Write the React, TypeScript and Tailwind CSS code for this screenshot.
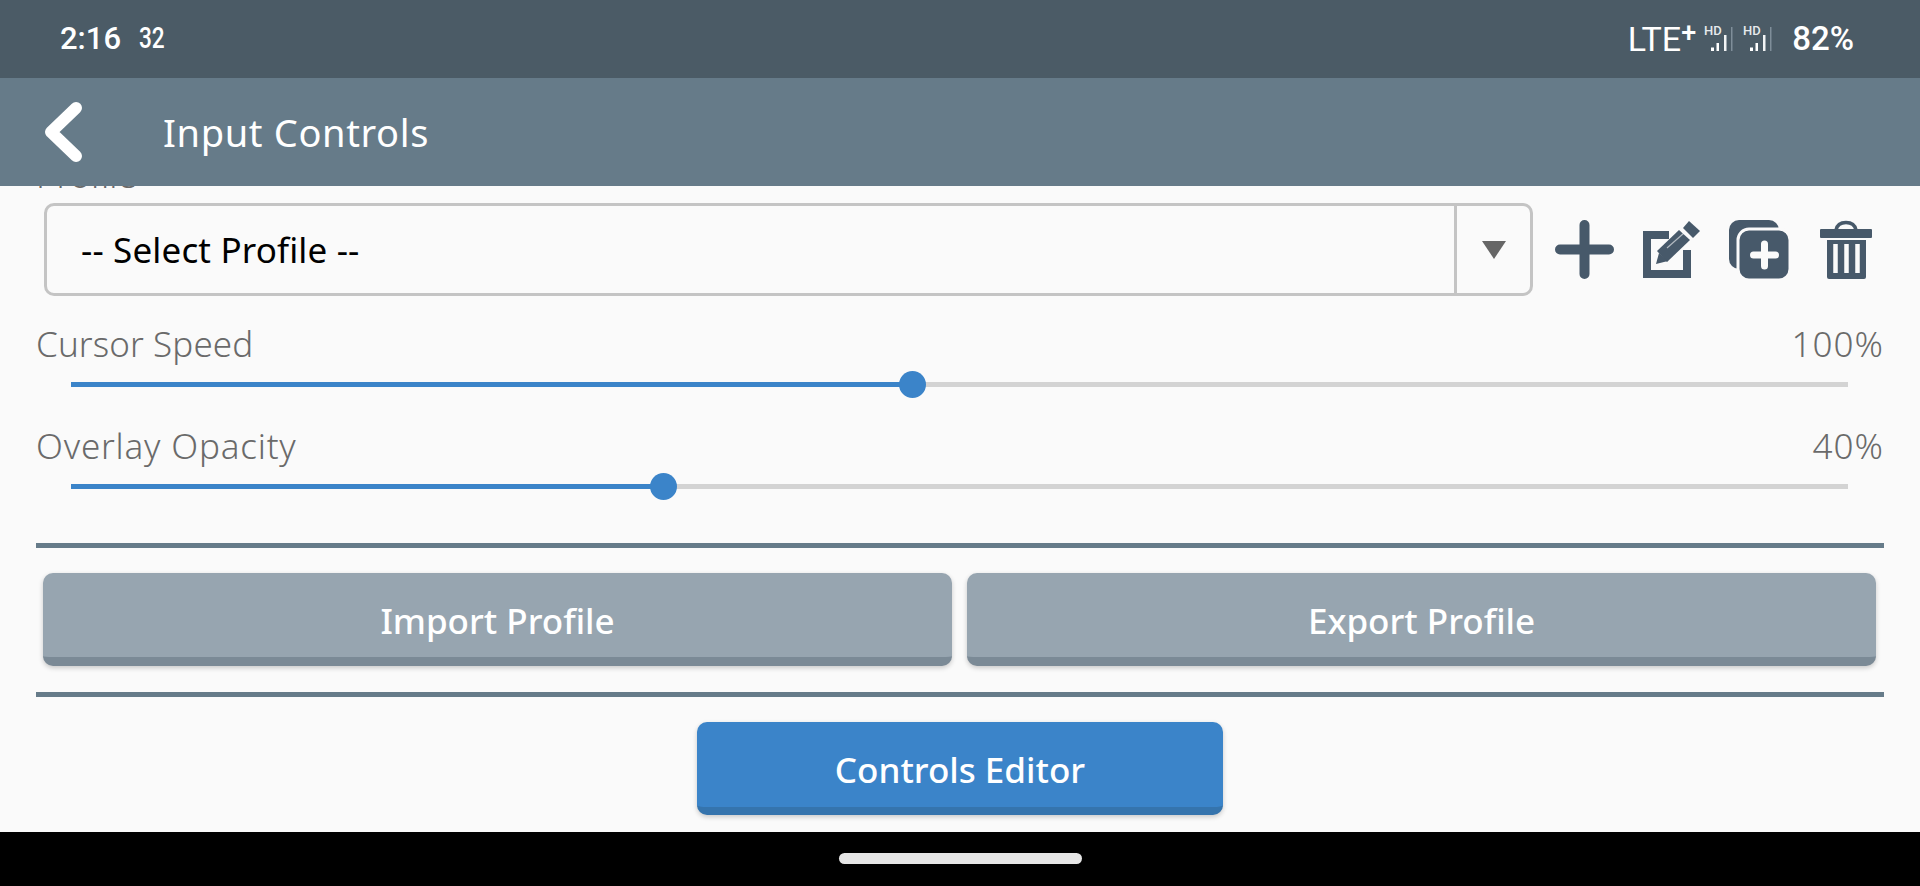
import { useState } from "react";

const FONT = "font-['Noto_Sans',sans-serif]";

function SignalIcon() {
  return (
    <svg width="32" height="30" viewBox="0 0 32 30" className="block">
      <text x="1" y="11" fontSize="13" fill="#e6eaec" fontFamily="Roboto, sans-serif">HD</text>
      <rect x="8" y="23.5" width="3" height="3.5" fill="#fff" />
      <rect x="13.5" y="19" width="2.5" height="8" fill="#fff" />
      <rect x="21" y="11" width="2.5" height="16" fill="#f2f4f5" />
      <rect x="28" y="3" width="1.5" height="24" fill="#7f8e99" />
    </svg>
  );
}

function PlusIcon() {
  return (
    <svg width="59" height="59" viewBox="0 0 59 59">
      <path d="M29.5 5v49M5 29.5h49" stroke="#47596a" strokeWidth="10" strokeLinecap="round" fill="none" />
    </svg>
  );
}

function EditIcon() {
  return (
    <svg width="58" height="58" viewBox="0 0 58 58">
      <path d="M26 14H4v39h40V29" stroke="#47596a" strokeWidth="8" fill="none" />
      <path d="M46 0 L57 10 L50 17 L40 7 Z" fill="#47596a" />
      <path d="M36 9 L47 19 L24 41 L14 30 Z" fill="#47596a" />
      <path d="M13 43 L16 32 L25 40 Z" fill="#47596a" />
      <path d="M24 27 L41 12" stroke="#fafafa" strokeWidth="1.2" opacity="0.6" fill="none" />
    </svg>
  );
}

function CopyPlusIcon() {
  return (
    <svg width="60" height="59" viewBox="0 0 60 59">
      <rect x="0" y="0" width="50" height="49" rx="10" fill="#47596a" />
      <rect x="9" y="9" width="52" height="51" rx="11" fill="#47596a" stroke="#fafafa" strokeWidth="3" />
      <path d="M35.5 24v22M24.5 35h22" stroke="#fafafa" strokeWidth="7" strokeLinecap="round" fill="none" />
    </svg>
  );
}

function TrashIcon() {
  return (
    <svg width="52" height="59" viewBox="0 0 52 59">
      <path d="M16 10C17 5 21 2.5 26 2.5s9 2.5 10 7.5" stroke="#47596a" strokeWidth="3.5" fill="none" />
      <rect x="0" y="9" width="52" height="9" rx="1" fill="#47596a" />
      <path d="M7 20h39v37a2 2 0 0 1-2 2H9a2 2 0 0 1-2-2Z" fill="#47596a" />
      <path d="M15.5 24v29M26.5 24v29M37.5 24v29" stroke="#fafafa" strokeWidth="4.5" fill="none" />
    </svg>
  );
}

function Slider({
  label,
  value,
  percent,
  labelClass,
}: {
  label: string;
  value: string;
  percent: number;
  labelClass: string;
}) {
  return (
    <div className="flex flex-col">
      <div className="flex justify-between h-[38px] pb-[2px] items-center text-[35px] leading-none text-[#6a6a6a] font-light">
        <span className={labelClass}>{label}</span>
        <span className="tracking-[1px]">{value}</span>
      </div>
      <div className="relative h-[27px] ml-[35px] mr-[36px] mt-[8px] flex items-center">
        <div className="w-full h-[5px] bg-[#d3d3d3]"></div>
        <div className="absolute left-0 h-[5px] bg-[#3b84c9]" style={{ width: `${percent}%` }}></div>
        <div
          className="absolute w-[27px] h-[27px] -ml-[13px] rounded-full bg-[#3b84c9]"
          style={{ left: `${percent}%` }}
        ></div>
      </div>
    </div>
  );
}

export default function App() {
  const [profile] = useState("-- Select Profile --");

  return (
    <div className={`flex flex-col h-screen overflow-hidden bg-[#fafafa] ${FONT}`}>
      {/* status bar */}
      <div className="flex items-center justify-between h-[78px] shrink-0 bg-[#4b5b66] pl-[60px] pr-[66px] pb-[1px] text-white font-['Roboto',sans-serif] font-medium">
        <div className="flex items-center">
          <span className="text-[31px] leading-none">2:16</span>
          <span className="text-[29px] leading-none ml-[18px] inline-block origin-left scale-x-[0.78]">32</span>
        </div>
        <div className="flex items-center">
          <span className="text-[34px] leading-none font-normal">LTE</span>
          <span className="text-[27px] leading-none font-medium -mt-[10px]">+</span>
          <div className="flex ml-[7px] gap-[7px]">
            <SignalIcon />
            <SignalIcon />
          </div>
          <span className="text-[33px] leading-none ml-[18px]">82%</span>
        </div>
      </div>

      {/* header */}
      <div className="relative z-10 flex items-center h-[108px] shrink-0 bg-[#667b89] text-white">
        <svg width="40" height="64" viewBox="0 0 40 64" className="ml-[43px]">
          <path d="M33 8 L8 32 L33 56" stroke="#fff" strokeWidth="12" strokeLinecap="round" strokeLinejoin="round" fill="none" />
        </svg>
        <span className="ml-[80px] text-[38px] leading-none tracking-[0.65px]">Input Controls</span>
      </div>

      <main className="flex-1 min-h-0 flex flex-col px-[36px] overflow-hidden">
        <div className="h-[38px] -mt-[29px] text-[35px] leading-none text-[#6a6a6a] font-light shrink-0">Profile</div>

        <div className="flex items-center mt-[8px] shrink-0">
          <div className="flex ml-[8px] w-[1489px] h-[93px] rounded-[10px] border-[3px] border-[#c4c4c4] bg-[#fafafa]">
            <div className="flex-1 flex items-center pl-[34px] text-[35px] leading-none tracking-[0.15px] text-black">{profile}</div>
            <div className="w-[76px] flex items-center justify-center border-l-[3px] border-[#c4c4c4]">
              <svg width="24" height="18" viewBox="0 0 24 18">
                <path d="M0 0h24L12 18Z" fill="#666" />
              </svg>
            </div>
          </div>
          <div className="flex items-center ml-[22px]">
            <PlusIcon />
            <div className="ml-[29px]"><EditIcon /></div>
            <div className="ml-[28px]"><CopyPlusIcon /></div>
            <div className="ml-[31px]"><TrashIcon /></div>
          </div>
        </div>

        <div className="flex flex-col gap-[29px] mt-[29px] shrink-0">
          <Slider label="Cursor Speed" value="100%" percent={47.3} labelClass="tracking-[0.1px]" />
          <Slider label="Overlay Opacity" value="40%" percent={33.3} labelClass="tracking-[0.8px]" />
        </div>

        <div className="h-[5px] bg-[#667b89] mt-[43px] shrink-0"></div>

        <div className="flex gap-[15px] pl-[7px] pr-[8px] mt-[25px] shrink-0">
          <button className="flex-1 h-[93px] pt-[11px] rounded-[10px] bg-[#97a5b0] border-b-[9px] border-[#7b8a96] shadow-[0_2px_5px_rgba(0,0,0,0.2)] text-white text-[35px] leading-none font-medium">
            Import Profile
          </button>
          <button className="flex-1 h-[93px] pt-[11px] rounded-[10px] bg-[#97a5b0] border-b-[9px] border-[#7b8a96] shadow-[0_2px_5px_rgba(0,0,0,0.2)] text-white text-[35px] leading-none font-medium">
            Export Profile
          </button>
        </div>

        <div className="h-[5px] bg-[#667b89] mt-[26px] shrink-0"></div>

        <div className="flex justify-center mt-[25px] shrink-0">
          <button className="w-[526px] h-[93px] pt-[9px] rounded-[10px] bg-[#3b84c9] border-b-[8px] border-[#3574ad] shadow-[0_2px_5px_rgba(0,0,0,0.2)] text-white text-[35px] leading-none font-medium">
            Controls Editor
          </button>
        </div>
      </main>

      {/* nav bar */}
      <div className="flex justify-center h-[54px] pt-[21px] shrink-0 bg-black">
        <div className="w-[243px] h-[11px] rounded-full bg-[#e6e6e6]"></div>
      </div>
    </div>
  );
}
